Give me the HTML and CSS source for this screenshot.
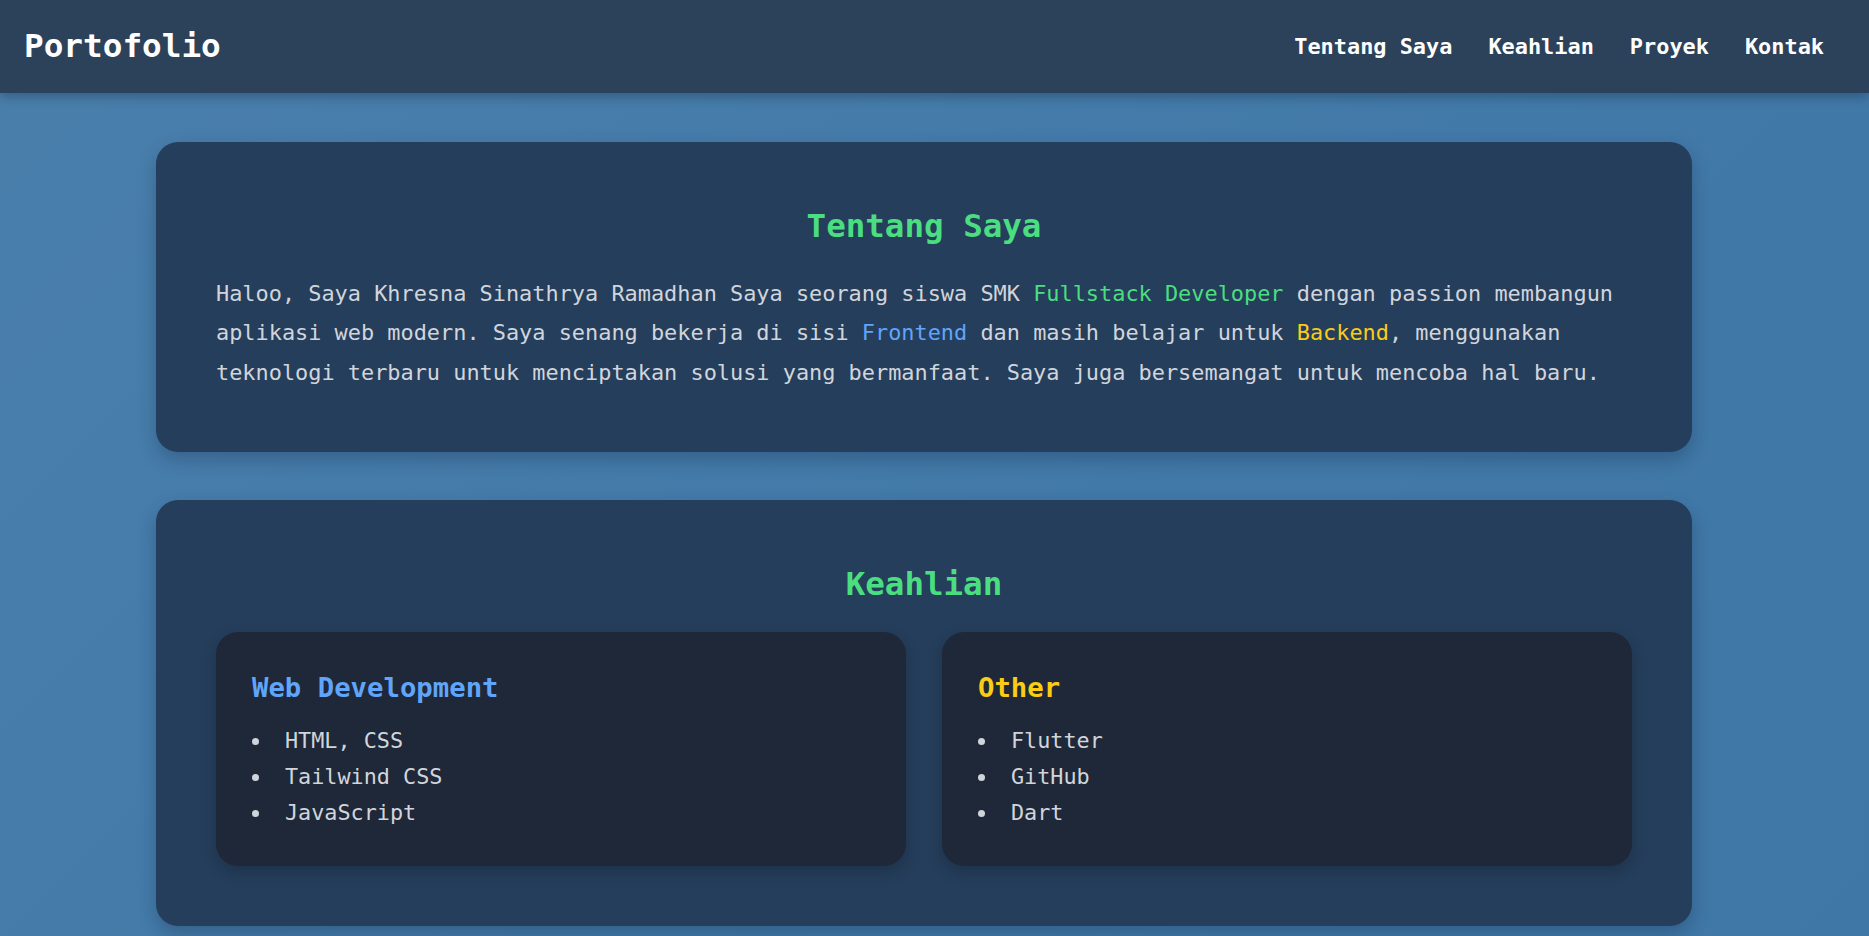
FILE: index.html
```html
<!DOCTYPE html>
<html lang="id">
<head>
<meta charset="utf-8">
<title>Portofolio</title>
<link rel="stylesheet" href="styles.css">
</head>
<body>
<header class="topbar">
  <div class="topbar-inner">
    <div class="logo">Portofolio</div>
    <nav class="nav">
      <a href="#tentang">Tentang Saya</a>
      <a href="#keahlian">Keahlian</a>
      <a href="#proyek">Proyek</a>
      <a href="#kontak">Kontak</a>
    </nav>
  </div>
</header>
<main class="main">
  <section class="panel" id="tentang">
    <h2 class="panel-title">Tentang Saya</h2>
    <p class="about">Haloo, Saya Khresna Sinathrya Ramadhan Saya seorang siswa SMK <span class="green">Fullstack Developer</span> dengan passion membangun aplikasi web modern. Saya senang bekerja di sisi <span class="blue">Frontend</span> dan masih belajar untuk <span class="yellow">Backend</span>, menggunakan teknologi terbaru untuk menciptakan solusi yang bermanfaat. Saya juga bersemangat untuk mencoba hal baru.</p>
  </section>
  <section class="panel" id="keahlian">
    <h2 class="panel-title">Keahlian</h2>
    <div class="skills">
      <div class="skill-card">
        <h3 class="skill-title blue">Web Development</h3>
        <ul class="skill-list">
          <li>HTML, CSS</li>
          <li>Tailwind CSS</li>
          <li>JavaScript</li>
        </ul>
      </div>
      <div class="skill-card">
        <h3 class="skill-title yellow">Other</h3>
        <ul class="skill-list">
          <li>Flutter</li>
          <li>GitHub</li>
          <li>Dart</li>
        </ul>
      </div>
    </div>
  </section>
</main>
</body>
</html>
```
FILE: styles.css
```css
* { box-sizing: border-box; }
html, body { margin: 0; padding: 0; }
body {
  font-family: "DejaVu Sans Mono", "Liberation Mono", monospace;
  background: linear-gradient(135deg, #4a7fac 0%, #4179a8 60%, #3f77a6 100%);
  min-height: 936px;
  color: #d1d5db;
  overflow: hidden;
}
.topbar {
  background: #2c425b;
  height: 93px;
  box-shadow: 0 4px 10px rgba(20, 35, 55, 0.35);
  position: relative;
  z-index: 1;
}
.topbar-inner {
  height: 100%;
  margin-right: 21px;
  padding: 0 24px;
  display: flex;
  align-items: center;
  justify-content: space-between;
}
.logo {
  font-size: 32.7px;
  font-weight: bold;
  color: #ffffff;
  padding-bottom: 2px;
}
.nav {
  display: flex;
  gap: 36px;
}
.nav a {
  color: #ffffff;
  text-decoration: none;
  font-weight: bold;
  font-size: 21.9px;
}
.main {
  margin-right: 21px;
  padding: 49px 0 0;
  display: flex;
  flex-direction: column;
  align-items: center;
  gap: 48px;
}
.panel {
  width: 1536px;
  background: #253e5b;
  border-radius: 22px;
  padding: 60px;
  box-shadow: 0 8px 18px rgba(20, 40, 70, 0.3);
}
.panel-title {
  margin: 0 0 24px;
  text-align: center;
  font-size: 32.5px;
  line-height: 48px;
  font-weight: bold;
  color: #4ade80;
}
.about {
  margin: 0;
  font-size: 21.9px;
  line-height: 39.4px;
  color: #d1d5db;
}
.green { color: #4ade80; }
.blue { color: #60a5fa; }
.yellow { color: #facc15; }
.skills {
  display: grid;
  grid-template-columns: 1fr 1fr;
  gap: 36px;
}
.skill-card {
  background: #1f2838;
  border-radius: 22px;
  padding: 36px 36px 35px;
  box-shadow: 0 6px 14px rgba(15, 25, 40, 0.3);
}
.skill-title {
  margin: 0 0 15px;
  font-size: 27.3px;
  line-height: 40px;
  font-weight: bold;
}
.skill-list {
  list-style: none;
  margin: 0;
  padding: 0;
}
.skill-list li {
  display: flex;
  align-items: center;
  font-size: 21.8px;
  line-height: 36px;
  color: #d1d5db;
}
.skill-list li::before {
  content: "";
  width: 7px;
  height: 7px;
  border-radius: 50%;
  background: #d1d5db;
  margin-right: 26px;
  flex: none;
}
```
